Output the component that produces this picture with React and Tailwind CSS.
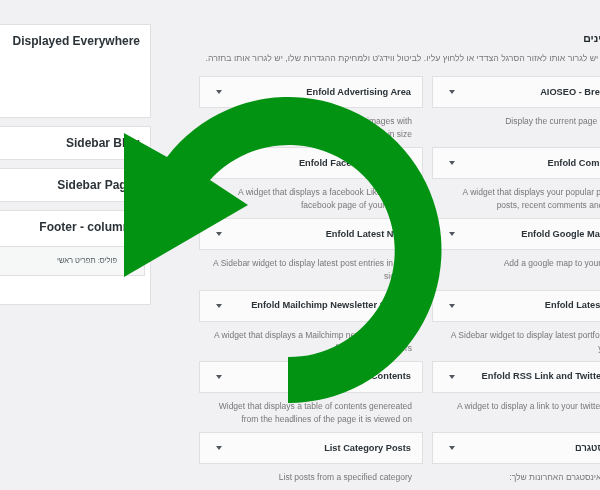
const font = { fontFamily: '"Liberation Sans", Arial, sans-serif' };

const columnOne = [
  { title: "Enfold Advertising Area", desc: "An advertising widget that displays 2 images with 125 x 125 px in size" },
  { title: "Enfold Facebook Likebox", desc: "A widget that displays a facebook Likebox to a facebook page of your choice" },
  { title: "Enfold Latest News", desc: "A Sidebar widget to display latest post entries in your sidebar" },
  { title: "Enfold Mailchimp Newsletter Signup", desc: "A widget that displays a Mailchimp newsletter signup form to your readers" },
  { title: "Enfold Table of Contents", desc: "Widget that displays a table of contents genereated from the headlines of the page it is viewed on" },
  { title: "List Category Posts", desc: "List posts from a specified category" },
];

const columnTwo = [
  { title: "AIOSEO - Breadcrumbs", desc: "Display the current page breadcrumb" },
  { title: "Enfold Combo Widget", desc: "A widget that displays your popular posts, recent posts, recent comments and a tagcloud" },
  { title: "Enfold Google Maps Widget", desc: "Add a google map to your blog or site" },
  { title: "Enfold Latest Portfolio", desc: "A Sidebar widget to display latest portfolio entries in your sidebar" },
  { title: "Enfold RSS Link and Twitter Account", desc: "A widget to display a link to your twitter profile and RSS feed" },
  { title: "פוסטי אינסטגרם", desc: "הצג תמונות אינסטגרם האחרונות שלך:" },
];

function Widget({ title, desc }) {
  return (
    <div className="h-[71.2px]">
      <div className="h-8 flex items-center justify-between pr-[11px] pl-3 bg-[#fbfbfb] border border-[#e0e0e2]">
        <span className="text-[9.25px] font-bold text-[#2c3338] whitespace-nowrap pt-px">{title}</span>
        <span className="w-0 h-0 border-x-[3px] border-x-transparent border-t-[4px] border-t-[#50575e] ml-1" />
      </div>
      <p className="mt-[7px] pr-[11px] pl-3 text-[8.5px] leading-[13px] text-[#777] text-right">{desc}</p>
    </div>
  );
}

function Area({ title, className, children }) {
  return (
    <div className={`bg-white border border-[#e0e0e2] ${className}`}>
      <div className="h-[31px] flex items-center px-[10px] text-[12px] font-bold text-[#2c3338] whitespace-nowrap">
        {title}
      </div>
      {children}
    </div>
  );
}

export default function App() {
  return (
    <div className="relative w-[600px] h-[490px] overflow-hidden bg-[#f1f1f3]" style={font}>
      <div dir="rtl" className="w-[761px] -ml-[105px] flex gap-12 blur-[0.5px]">
        {/* available widgets, spills past the right edge */}
        <div className="w-[457px] shrink-0 pt-[31px]">
          <h2 className="text-[10.5px] font-bold leading-[14px] text-[#1d2327]">ווידג'טים זמינים</h2>
          <p className="mt-[7px] text-[8.7px] leading-3 text-[#777] whitespace-nowrap">
            להפעלת ווידג'ט יש לגרור אותו לאזור הסרגל הצדדי או ללחוץ עליו. לביטול ווידג'ט ולמחיקת ההגדרות שלו, יש לגרור אותו בחזרה.
          </p>
          <div className="mt-[12px] grid grid-cols-2 gap-x-[9px]">
            {columnTwo.map((w, i) => (
              <div key={w.title} className="contents">
                <Widget {...w} />
                <Widget {...columnOne[i]} />
              </div>
            ))}
          </div>
        </div>

        {/* sidebars, starts off the left edge */}
        <div className="w-[256px] shrink-0 pt-6 flex flex-col gap-2">
          <Area title="Displayed Everywhere" className="h-[94px]" />
          <Area title="Sidebar Blog" className="h-[34px]" />
          <Area title="Sidebar Pages" className="h-[34px]" />
          <Area title="Footer - column 1" className="h-[95px]">
            <div className="mr-[5px] ml-[6px] mt-1 h-[30px] pr-[27px] flex items-center bg-[#f6f7f7] border border-[#e0e0e2] text-[7.5px] text-[#50575e]">
              פוליס: תפריט ראשי
            </div>
          </Area>
        </div>
      </div>

      {/* big undo arrow lying over the screenshot */}
      <svg className="absolute left-0 top-0" width="600" height="490" viewBox="0 0 600 490">
        <path
          d="M288 357 A106 106 0 1 0 210 180 L248 205 L124 277 L124 133 L167 157 A153 153 0 1 1 288 403 Z"
          fill="#039312"
        />
      </svg>
    </div>
  );
}
